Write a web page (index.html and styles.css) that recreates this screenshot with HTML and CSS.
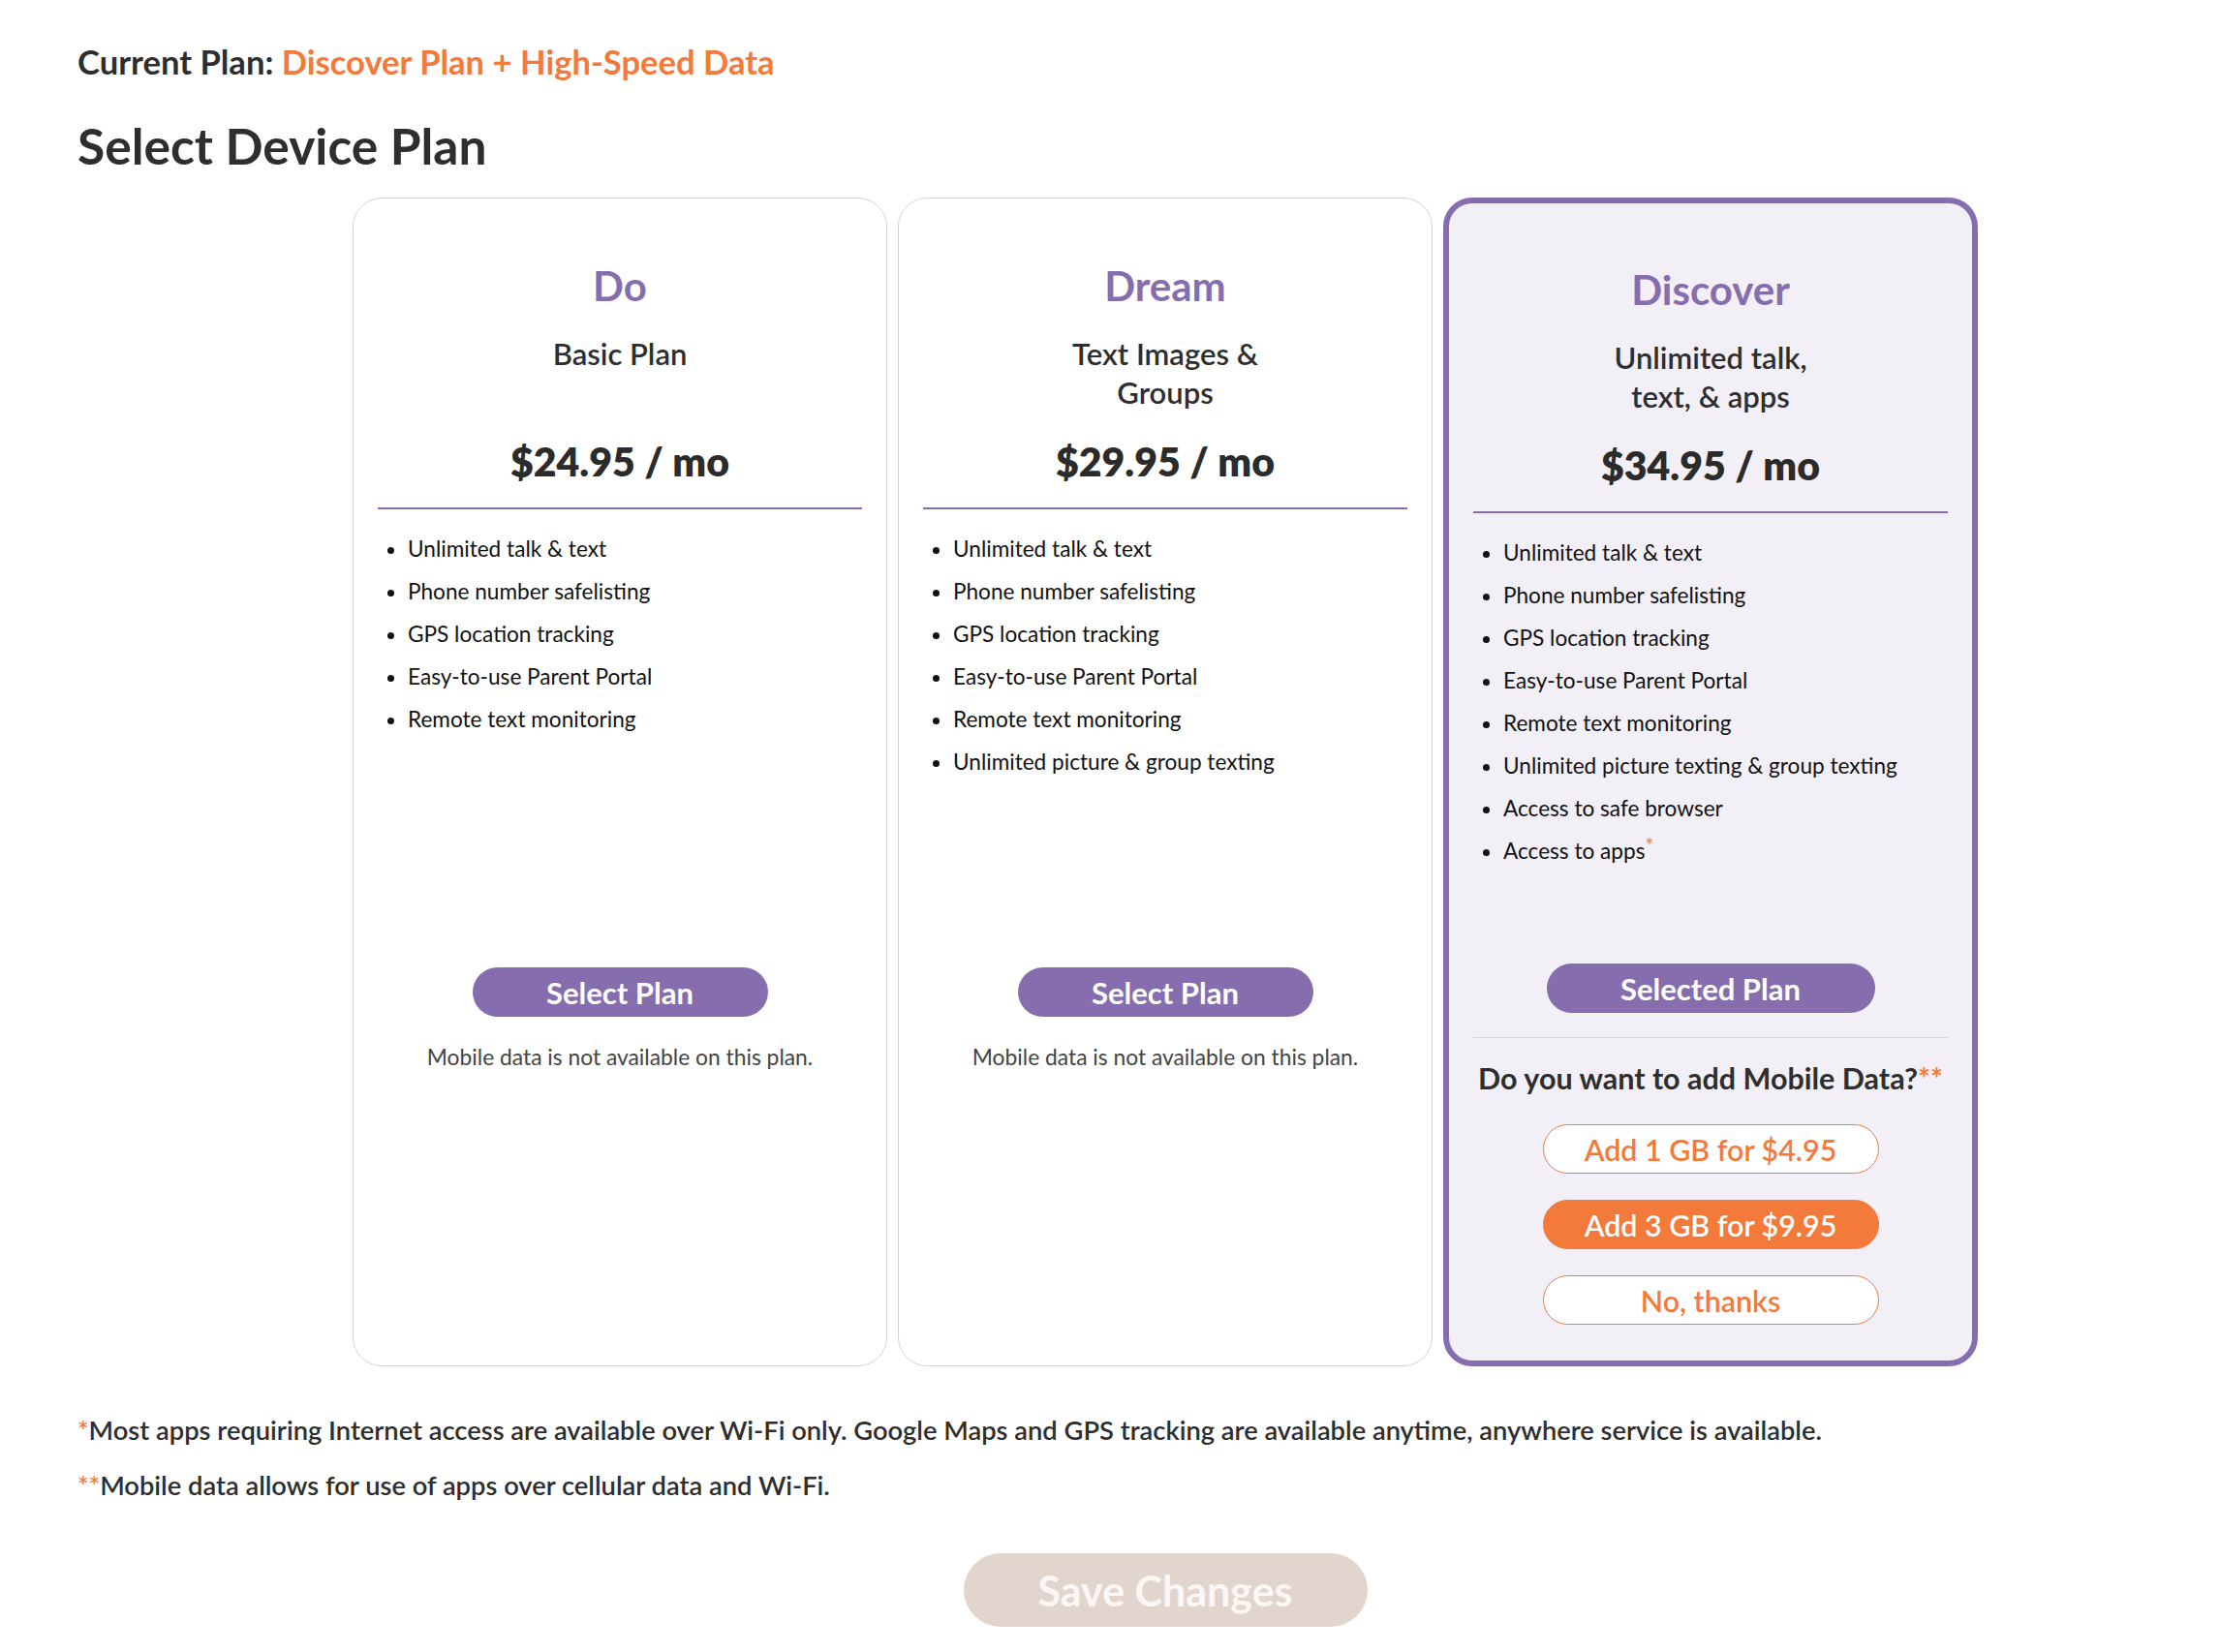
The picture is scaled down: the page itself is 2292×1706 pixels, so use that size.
FILE: index.html
```html
<!DOCTYPE html>
<html lang="en">
<head>
<meta charset="utf-8">
<title>Select Device Plan</title>
<link rel="stylesheet" href="styles.css">
</head>
<body>
<main class="page">
  <p class="current">Current Plan: <span class="accent">Discover Plan + High-Speed Data</span></p>
  <h1 class="title">Select Device Plan</h1>

  <div class="plans">
    <section class="card">
      <div class="card-head">
        <h2 class="plan-name">Do</h2>
        <p class="plan-sub">Basic Plan</p>
        <p class="plan-price">$24.95 / mo</p>
      </div>
      <ul class="features">
        <li>Unlimited talk &amp; text</li>
        <li>Phone number safelisting</li>
        <li>GPS location tracking</li>
        <li>Easy-to-use Parent Portal</li>
        <li>Remote text monitoring</li>
      </ul>
      <div class="card-foot">
        <button class="btn btn-plan" type="button">Select Plan</button>
        <p class="note">Mobile data is not available on this plan.</p>
      </div>
    </section>

    <section class="card">
      <div class="card-head">
        <h2 class="plan-name">Dream</h2>
        <p class="plan-sub">Text Images &amp;<br>Groups</p>
        <p class="plan-price">$29.95 / mo</p>
      </div>
      <ul class="features">
        <li>Unlimited talk &amp; text</li>
        <li>Phone number safelisting</li>
        <li>GPS location tracking</li>
        <li>Easy-to-use Parent Portal</li>
        <li>Remote text monitoring</li>
        <li>Unlimited picture &amp; group texting</li>
      </ul>
      <div class="card-foot">
        <button class="btn btn-plan" type="button">Select Plan</button>
        <p class="note">Mobile data is not available on this plan.</p>
      </div>
    </section>

    <section class="card card--selected">
      <div class="card-head">
        <h2 class="plan-name">Discover</h2>
        <p class="plan-sub">Unlimited talk,<br>text, &amp; apps</p>
        <p class="plan-price">$34.95 / mo</p>
      </div>
      <ul class="features">
        <li>Unlimited talk &amp; text</li>
        <li>Phone number safelisting</li>
        <li>GPS location tracking</li>
        <li>Easy-to-use Parent Portal</li>
        <li>Remote text monitoring</li>
        <li>Unlimited picture texting &amp; group texting</li>
        <li>Access to safe browser</li>
        <li>Access to apps<span class="star">*</span></li>
      </ul>
      <div class="card-foot">
        <button class="btn btn-plan btn-selected" type="button">Selected Plan</button>
        <div class="data-addon">
          <p class="question">Do you want to add Mobile Data?<span class="stars">**</span></p>
          <div class="addon-options">
            <button class="btn btn-data" type="button">Add 1 GB for $4.95</button>
            <button class="btn btn-data btn-data--active" type="button">Add 3 GB for $9.95</button>
            <button class="btn btn-data" type="button">No, thanks</button>
          </div>
        </div>
      </div>
    </section>
  </div>

  <div class="footnotes">
    <p><span class="accent">*</span>Most apps requiring Internet access are available over Wi-Fi only. Google Maps and GPS tracking are available anytime, anywhere service is available.</p>
    <p><span class="accent">**</span>Mobile data allows for use of apps over cellular data and Wi-Fi.</p>
  </div>

  <div class="save-row">
    <button class="btn btn-save" type="button">Save Changes</button>
  </div>
</main>
</body>
</html>
```

FILE: styles.css
```css
* { box-sizing: border-box; }

html, body {
  margin: 0;
  padding: 0;
  background: #ffffff;
}

body {
  font-family: "Lato", "Noto Sans", "Liberation Sans", sans-serif;
  color: #2e2e2e;
}

.page {
  padding: 46px 0 24px 80px;
}

.current {
  margin: 0;
  font-size: 34.6px;
  line-height: 36px;
  font-weight: 700;
  color: #2e2e2e;
}

.accent { color: #f37a3b; }

.title {
  margin: 39px 0 0;
  font-size: 51.5px;
  line-height: 58px;
  font-weight: 700;
  color: #2e2e2e;
}

.plans {
  display: flex;
  gap: 11px;
  margin: 25px 0 0 284px;
  width: 1678px;
}

.card {
  flex: 0 0 552px;
  display: flex;
  flex-direction: column;
  border: 1.5px solid #d4d4d4;
  border-radius: 30px;
  padding: 65px 25px 36px;
  background: #ffffff;
}

.card--selected {
  border: 6px solid #866eae;
  background: #f2eff7;
  padding: 64px 25px 37px;
}

.card-head {
  text-align: center;
}

.plan-name {
  margin: 0;
  font-size: 42px;
  line-height: 50px;
  font-weight: 700;
  color: #866eae;
}

.plan-sub {
  margin: 25px 0 0;
  height: 80px;
  font-size: 31px;
  line-height: 40px;
  font-weight: 600;
  color: #2e2e2e;
}

.plan-price {
  margin: 27px 0 0;
  font-size: 41px;
  line-height: 50px;
  font-weight: 800;
  color: #2b2b2b;
  padding-bottom: 22px;
  border-bottom: 2px solid #866eae;
}

.features {
  margin: 24px 0 0;
  padding: 0 0 0 31px;
  height: 449px;
  list-style: disc;
  font-size: 22.6px;
  line-height: 33px;
  color: #111111;
}

.card--selected .features {
  height: 441px;
}

.features li {
  margin-bottom: 11px;
}

.star, .stars {
  color: #f37a3b;
}

.star {
  font-size: 21px;
  line-height: 1;
  vertical-align: top;
}

.card-foot {
  display: flex;
  flex-direction: column;
  align-items: center;
}

.btn {
  font-family: inherit;
  border: none;
  cursor: pointer;
  border-radius: 999px;
}

.btn-plan {
  width: 305px;
  height: 51px;
  background: #866eae;
  color: #ffffff;
  font-size: 31px;
  font-weight: 700;
  padding: 0;
}

.btn-selected {
  width: 339px;
}

.note {
  margin: 26px 0 0;
  font-size: 22.8px;
  line-height: 30px;
  color: #444444;
  font-weight: 400;
}

.data-addon {
  align-self: stretch;
  margin-top: 25px;
  border-top: 1.5px solid #d6d6d6;
  display: flex;
  flex-direction: column;
  align-items: center;
}

.question {
  margin: 23px 0 0;
  font-size: 30.5px;
  line-height: 36px;
  font-weight: 700;
  color: #2e2e2e;
  white-space: nowrap;
}

.addon-options {
  margin-top: 30px;
  display: flex;
  flex-direction: column;
  align-items: center;
  gap: 27px;
}

.btn-data {
  width: 347px;
  height: 51px;
  background: #ffffff;
  border: 1.5px solid #f37a3b;
  color: #f37a3b;
  font-size: 30.4px;
  font-weight: 600;
  padding: 0;
}

.btn-data--active {
  background: #f37a3b;
  color: #ffffff;
}

.footnotes {
  margin-top: 49px;
  font-size: 27.3px;
  line-height: 34px;
  font-weight: 600;
  color: #2e2e2e;
}

.footnotes p {
  margin: 0 0 23px;
}

.save-row {
  width: 1678px;
  margin: 53px 0 0 284px;
  display: flex;
  justify-content: center;
}

.btn-save {
  width: 417px;
  height: 76px;
  background: #e1d5cd;
  color: #faf7f5;
  font-size: 43px;
  font-weight: 700;
  padding: 0;
}
```
